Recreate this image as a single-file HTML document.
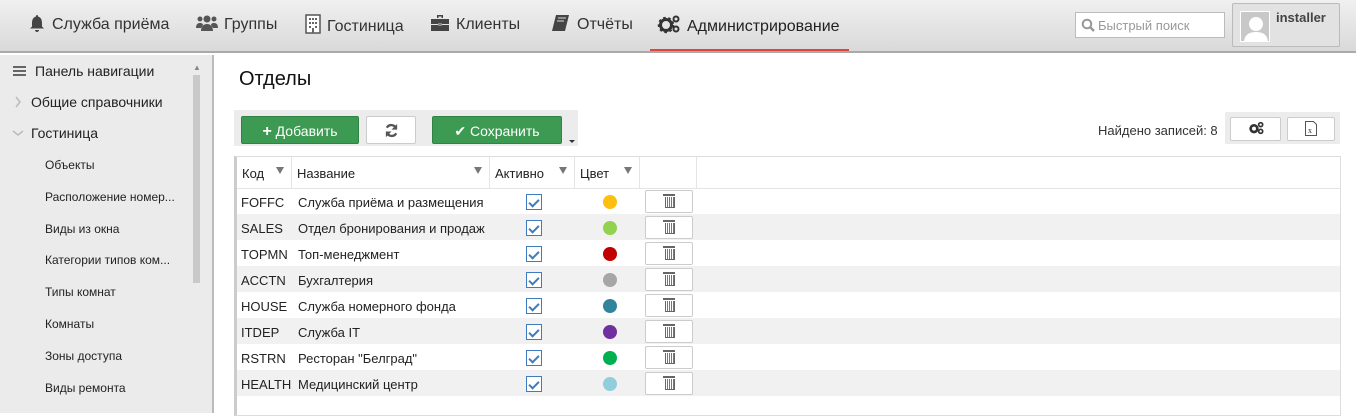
<!DOCTYPE html>
<html><head><meta charset="utf-8"><style>
*{box-sizing:border-box;margin:0;padding:0}
body{width:1356px;height:413px;overflow:hidden;font-family:"Liberation Sans",sans-serif;background:#fff;position:relative;color:#222}
.top{position:absolute;left:0;top:0;width:1356px;height:53px;background:linear-gradient(#f0f0f0,#d9d9d9);border-bottom:2px solid #aaa}
.nav{position:absolute;top:14px;font-size:16px;color:#333;white-space:nowrap}
.nav svg{vertical-align:-3px;margin-right:6px}
.ul{position:absolute;left:650px;top:49px;width:199px;height:2px;background:#e0453a}
.search{position:absolute;left:1075px;top:12px;width:150px;height:26px;background:#fff;border:1px solid #bbb;font-size:13px;color:#999;padding:5px 0 0 22px}
.user{position:absolute;left:1232px;top:3px;width:108px;height:44px;border:1px solid #bbb;border-radius:2px;background:#e2e2e2}
.av{position:absolute;left:7px;top:7px;width:30px;height:31px;background:#c8c8c8;border:1px solid #fff;overflow:hidden}
.side{position:absolute;left:0;top:55px;width:214px;height:358px;background:#ebebeb;border-right:2px solid #bbb}
.sb{position:absolute;left:193px;top:75px;width:7px;height:208px;background:#c9c9c9}
.s1{position:absolute;font-size:14px;color:#222}
.s2{position:absolute;left:45px;font-size:12px;color:#222}
h1{position:absolute;left:239px;top:68px;font-size:20px;font-weight:normal;color:#111}
.tb{position:absolute;left:234px;top:110px;width:344px;height:36px;background:#ececec}
.btn{position:absolute;top:116px;height:28px;border-radius:2px;font-size:14px;text-align:center;padding-top:6px}
.g{background:#3d9a52;color:#fff;border:1px solid #2f8444}
.w{background:#fff;border:1px solid #ccc;color:#555}
.found{position:absolute;left:1098px;top:123px;font-size:13px;color:#333}
.tb2{position:absolute;left:1225px;top:112px;width:115px;height:32px;background:#ececec}
.grid{position:absolute;left:234px;top:156px;width:1107px;height:260px;border:1px solid #ddd;border-left:3px solid #ccc}
.row{position:absolute;left:0;width:1103px;height:26px;font-size:13px}
.row.alt{background:#f1f1f1}
.c{position:absolute;top:7px}
.cb{position:absolute;left:289px;top:6px;width:16px;height:16px;border:1px solid #3d7cc0;background:#fff}
.dot{position:absolute;left:366px;top:7px;width:14px;height:14px;border-radius:50%}
.del{position:absolute;left:408px;top:2px;width:48px;height:23px;background:#fff;border:1px solid #ccc;border-radius:2px}
.hd{position:absolute;top:0;height:31px;border-right:1px solid #e4e4e4;font-size:13px;padding:9px 0 0 5px}
.f{position:absolute;right:7px;top:10px;width:0;height:0;border-left:4px solid transparent;border-right:4px solid transparent;border-top:7px solid #777}
.cb::after{content:"";position:absolute;left:4px;top:2px;width:4px;height:8px;border-right:2px solid #3d7cc0;border-bottom:2px solid #3d7cc0;transform:rotate(45deg)}
.del::after{content:"";position:absolute;left:19px;top:6px;width:8px;height:10px;border:1.5px solid #666;border-top:none;background:repeating-linear-gradient(90deg,#fff 0 1px,#b57 1px 2px)}
.del::before{content:"";position:absolute;left:17px;top:3px;width:12px;height:2px;background:#666}
</style></head><body>
<div class="top"></div>
<div class="nav" style="left:28px"><svg width="18" height="18" viewBox="0 0 18 18"><path d="M9 1c1 0 1 1 1 1.5 3 1 4 3 4 7l0 3 2 2H2l2-2 0-3c0-4 1-6 4-7C8 2 8 1 9 1zM7 16h4c0 1-1 2-2 2s-2-1-2-2z" fill="#444"/></svg>Служба приёма</div>
<div class="nav" style="left:196px"><svg width="22" height="18" viewBox="0 0 22 18"><circle cx="11" cy="5" r="3.5" fill="#555"/><circle cx="4" cy="5" r="2.5" fill="#555"/><circle cx="18" cy="5" r="2.5" fill="#555"/><path d="M5 17c0-5 3-7 6-7s6 2 6 7zM0 14c0-4 2-5 4-5s3 1 3 2l-2 3zM22 14c0-4-2-5-4-5s-3 1-3 2l2 3z" fill="#555"/></svg>Группы</div>
<div class="nav" style="left:305px"><svg width="16" height="20" viewBox="0 0 16 20"><rect x="1" y="1" width="14" height="18" fill="#fff" stroke="#555" stroke-width="1.5"/><path d="M4 4h2v2H4zM7 4h2v2H7zM10 4h2v2h-2zM4 8h2v2H4zM7 8h2v2H7zM10 8h2v2h-2zM4 12h2v2H4zM10 12h2v2h-2zM7 14h2v5H7z" fill="#666"/></svg>Гостиница</div>
<div class="nav" style="left:430px"><svg width="20" height="18" viewBox="0 0 20 18"><path d="M7 1h6v3h-1.5V2.5h-3V4H7zM1 5h18v5H1zM1 11h18v6H1z" fill="#444"/><rect x="8" y="9" width="4" height="3" fill="#888"/></svg>Клиенты</div>
<div class="nav" style="left:551px"><svg width="20" height="18" viewBox="0 0 20 18"><path d="M5 1h13l-4 16H1z" fill="#444"/><path d="M7 4h8M6 7h7" stroke="#ddd" stroke-width="1"/></svg>Отчёты</div>
<div class="nav" style="left:657px;color:#222"><svg width="24" height="20" viewBox="0 0 24 20"><circle cx="9" cy="11" r="5.5" fill="none" stroke="#333" stroke-width="3"/><circle cx="9" cy="11" r="7" fill="none" stroke="#333" stroke-width="2.5" stroke-dasharray="2.5 2.5"/><circle cx="19" cy="5" r="2.5" fill="none" stroke="#333" stroke-width="2"/><circle cx="19" cy="15" r="2.5" fill="none" stroke="#333" stroke-width="2"/></svg>Администрирование</div>
<div class="ul"></div>
<div class="search"><svg style="position:absolute;left:5px;top:5px" width="14" height="14" viewBox="0 0 14 14"><circle cx="6" cy="6" r="4.3" fill="none" stroke="#999" stroke-width="2"/><path d="M9 9l4 4" stroke="#999" stroke-width="2.5"/></svg>Быстрый поиск</div>
<div class="user"><div class="av"><svg width="30" height="31" viewBox="0 0 30 31"><circle cx="15" cy="12" r="7" fill="#fff"/><path d="M3 31c0-8 5-11 12-11s12 3 12 11z" fill="#fff"/></svg></div><div style="position:absolute;left:43px;top:6px;font-size:13px;font-weight:bold;color:#444">installer</div></div>

<div class="side"></div>
<div class="sb"></div>
<div style="position:absolute;left:193px;top:63px;font-size:8px;color:#888">▲</div>
<div class="s1" style="left:13px;top:63px"><span style="display:inline-block;width:13px;height:2px;background:#666;box-shadow:0 4px #666,0 -4px #666;vertical-align:4px;margin-right:9px"></span>Панель навигации</div>
<div class="s1" style="left:14px;top:94px"><svg width="8" height="12" viewBox="0 0 8 12" style="margin-right:9px;vertical-align:-1px"><path d="M2 1l4 5-4 5" fill="none" stroke="#bbb" stroke-width="1.5"/></svg>Общие справочники</div>
<div class="s1" style="left:12px;top:125px"><svg width="12" height="8" viewBox="0 0 12 8" style="margin-right:7px;vertical-align:1px"><path d="M1 2l5 4 5-4" fill="none" stroke="#bbb" stroke-width="1.5"/></svg>Гостиница</div>
<div class="s2" style="top:158px">Объекты</div>
<div class="s2" style="top:190px">Расположение номер...</div>
<div class="s2" style="top:222px">Виды из окна</div>
<div class="s2" style="top:253px">Категории типов ком...</div>
<div class="s2" style="top:285px">Типы комнат</div>
<div class="s2" style="top:317px">Комнаты</div>
<div class="s2" style="top:349px">Зоны доступа</div>
<div class="s2" style="top:381px">Виды ремонта</div>

<h1>Отделы</h1>
<div class="tb"></div>
<div class="btn g" style="left:241px;width:118px"><b style="font-size:16px">+</b> Добавить</div>
<div class="btn w" style="left:366px;width:50px"><svg width="15" height="15" viewBox="0 0 16 16"><path d="M13 6A5.5 5.5 0 0 0 3 5M3 10a5.5 5.5 0 0 0 10 1" fill="none" stroke="#555" stroke-width="2.5"/><path d="M14 1v6H8zM2 15V9h6z" fill="#555"/></svg></div>
<div class="btn g" style="left:432px;width:130px">✔ Сохранить</div>
<div style="position:absolute;left:569px;top:140px;border-left:3px solid transparent;border-right:3px solid transparent;border-top:3px solid #333"></div>
<div class="found">Найдено записей: 8</div>
<div class="tb2"></div>
<div class="btn w" style="left:1230px;top:117px;height:24px;width:51px;padding-top:3px"><svg width="16" height="14" viewBox="0 0 24 20"><circle cx="9" cy="11" r="5" fill="none" stroke="#333" stroke-width="4"/><circle cx="19" cy="5" r="3" fill="none" stroke="#333" stroke-width="2.5"/><circle cx="19" cy="15" r="3" fill="none" stroke="#333" stroke-width="2.5"/></svg></div>
<div class="btn w" style="left:1287px;top:117px;height:24px;width:48px;padding-top:3px"><svg width="12" height="15" viewBox="0 0 12 15"><path d="M.5.5h8l3 3v11H.5z" fill="#fff" stroke="#555"/><text x="3" y="12" font-size="8" fill="#333" font-family="Liberation Serif">x</text></svg></div>

<div class="grid">
<div class="hd" style="left:0;width:55px">Код<i class="f"></i></div>
<div class="hd" style="left:55px;width:198px">Название<i class="f"></i></div>
<div class="hd" style="left:253px;width:85px">Активно<i class="f"></i></div>
<div class="hd" style="left:338px;width:65px">Цвет<i class="f"></i></div>
<div class="hd" style="left:403px;width:57px"></div>
<div style="position:absolute;left:0;top:31px;width:1104px;height:1px;background:#e4e4e4"></div>
</div>
<div style="position:absolute;left:237px;top:188px">
<div class="row" style="top:0"><span class="c" style="left:4px">FOFFC</span><span class="c" style="left:61px">Служба приёма и размещения</span><i class="cb"></i><i class="dot" style="background:#fdc010"></i><i class="del"></i></div>
<div class="row alt" style="top:26px"><span class="c" style="left:4px">SALES</span><span class="c" style="left:61px">Отдел бронирования и продаж</span><i class="cb"></i><i class="dot" style="background:#93d150"></i><i class="del"></i></div>
<div class="row" style="top:52px"><span class="c" style="left:4px">TOPMN</span><span class="c" style="left:61px">Топ-менеджмент</span><i class="cb"></i><i class="dot" style="background:#c00000"></i><i class="del"></i></div>
<div class="row alt" style="top:78px"><span class="c" style="left:4px">ACCTN</span><span class="c" style="left:61px">Бухгалтерия</span><i class="cb"></i><i class="dot" style="background:#a6a6a6"></i><i class="del"></i></div>
<div class="row" style="top:104px"><span class="c" style="left:4px">HOUSE</span><span class="c" style="left:61px">Служба номерного фонда</span><i class="cb"></i><i class="dot" style="background:#31849b"></i><i class="del"></i></div>
<div class="row alt" style="top:130px"><span class="c" style="left:4px">ITDEP</span><span class="c" style="left:61px">Служба IT</span><i class="cb"></i><i class="dot" style="background:#7030a0"></i><i class="del"></i></div>
<div class="row" style="top:156px"><span class="c" style="left:4px">RSTRN</span><span class="c" style="left:61px">Ресторан "Белград"</span><i class="cb"></i><i class="dot" style="background:#00b050"></i><i class="del"></i></div>
<div class="row alt" style="top:182px"><span class="c" style="left:4px">HEALTH</span><span class="c" style="left:61px">Медицинский центр</span><i class="cb"></i><i class="dot" style="background:#92cddc"></i><i class="del"></i></div>
</div>
</body></html>
